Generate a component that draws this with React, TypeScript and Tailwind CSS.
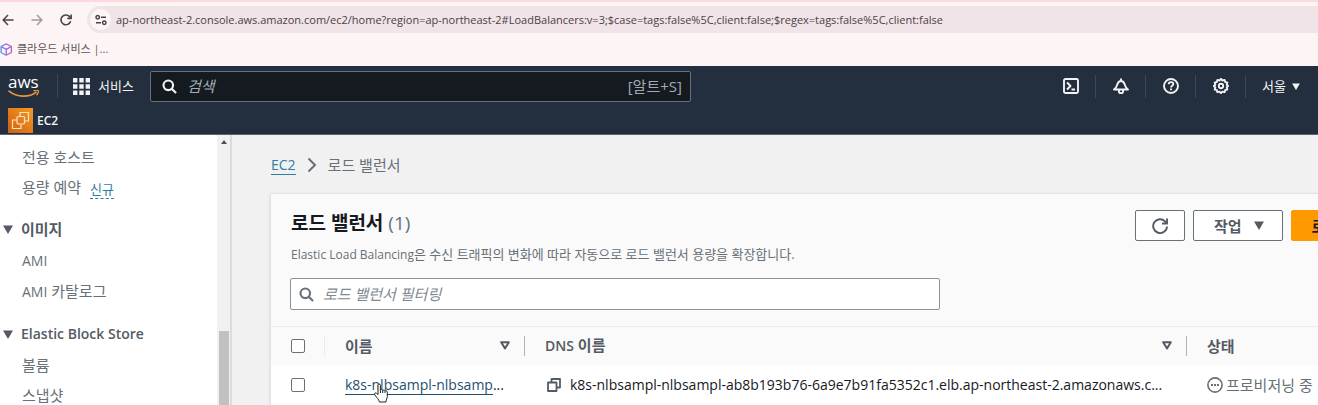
import { ReactNode } from 'react'

const imageLinks = [
  { prefix: 'AMI', name: '' },
  { prefix: 'AMI', name: ' 카탈로그' }
]
const storeLinks = [
  { prefix: '', name: '볼륨' },
  { prefix: '', name: '스냅샷' }
]

function Caret({ className = '' }: { className?: string }) {
  return (
    <svg viewBox="0 0 10 9" className={className} fill="currentColor" aria-hidden="true">
      <path d="M0 0.5h10L5 9z" />
    </svg>
  )
}

function SortIcon() {
  return (
    <svg viewBox="0 0 10 9" className="w-[10px] h-[9px] text-[#545b64]" fill="none" stroke="currentColor" strokeWidth="2" strokeLinejoin="round" aria-hidden="true">
      <path d="M1.2 1.2h7.6L5 7.4z" />
    </svg>
  )
}

function SearchIcon({ className = '' }: { className?: string }) {
  return (
    <svg viewBox="0 0 16 16" className={className} fill="none" stroke="currentColor" strokeWidth="2.3" aria-hidden="true">
      <circle cx="6.7" cy="6.7" r="5.1" />
      <path d="M10.3 10.3L15 15" />
    </svg>
  )
}

function BrowserBar() {
  return (
    <div className="bg-[#fdf5f5] text-[#4a4246]">
      <div className="h-[2px] flex">
        <div className="w-[183px] bg-[#fbd9dc]" />
        <div className="flex-1 bg-[#f9dcdc]" />
      </div>
      <div className="flex items-center pt-1 h-[31px]">
        <button aria-label="Back" className="w-4 flex justify-center">
          <svg viewBox="0 0 12 12" className="w-3 h-3" fill="none" stroke="#4a4246" strokeWidth="1.5">
            <path d="M11.5 6H1.5M6 1L1.2 6 6 11" />
          </svg>
        </button>
        <button aria-label="Forward" className="w-[41px] flex justify-center">
          <svg viewBox="0 0 12 12" className="w-3 h-3" fill="none" stroke="#a39a9e" strokeWidth="1.5">
            <path d="M0.5 6h10M6 1l4.8 5L6 11" />
          </svg>
        </button>
        <button aria-label="Reload" className="w-[17px] flex justify-center">
          <svg viewBox="0 0 12 12" className="w-3 h-3" fill="none" stroke="#4a4246" strokeWidth="1.6">
            <path d="M10.6 7.3A4.9 4.9 0 1 1 9.6 2.6L11 4" />
            <path d="M11.1 0.6v3.8H7.3" />
          </svg>
        </button>
        <div className="flex-1 h-[27px] ml-[13px] pl-[3px] flex items-center rounded-l-full bg-[#f0e4e8]">
          <span className="w-[21px] h-[21px] rounded-full bg-[#fdf5f5] flex items-center justify-center">
            <svg viewBox="0 0 12 12" className="w-3 h-3" fill="none" stroke="#4a4246" strokeWidth="1.5">
              <circle cx="2.7" cy="3.2" r="1.7" />
              <path d="M6 3.2h5M1 8.8h5" />
              <circle cx="9.3" cy="8.8" r="1.7" />
            </svg>
          </span>
          <span className="ml-[5px] text-[11px] leading-4 whitespace-nowrap">
            ap-northeast-2.console.aws.amazon.com/ec2/home?region=ap-northeast-2#LoadBalancers:v=3;$case=tags:false%5C,client:false;$regex=tags:false%5C,client:false
          </span>
        </div>
      </div>
      <div className="h-[33px] pb-px flex items-center">
        <a href="#bookmark" className="flex items-center text-[11px] leading-4 text-[#5c5558]">
          <svg viewBox="0 0 14 14" className="w-[13px] h-[13px]" fill="none" strokeWidth="1.4" strokeLinejoin="round">
            <path d="M6.5 0.9L1.2 3.8v6.4l5.3 3" stroke="#5b8def" />
            <path d="M6.5 0.9l5.8 2.9v6.4l-5.8 3" stroke="#c65bd0" />
            <path d="M1.2 3.8l5.5 3 5.6-3M6.7 6.8v6.2" stroke="#8a6be0" />
          </svg>
          <span className="ml-1">클라우드 서비스 |...</span>
        </a>
      </div>
    </div>
  )
}

function NavButton({ label, children }: { label: string; children: ReactNode }) {
  return (
    <button aria-label={label} className="w-[50px] h-[23px] flex items-center justify-center border-r border-[#3c4858]">
      <svg viewBox="0 0 16 16" className="w-4 h-4" fill="none" stroke="currentColor" strokeWidth="1.9" strokeLinejoin="round">
        {children}
      </svg>
    </button>
  )
}

function AwsHeader() {
  return (
    <header className="bg-[#232f3e] text-[#f2f3f3] border-b border-[#5a6470]">
      <div className="h-10 flex items-center pr-[18px]">
        <a href="#home" className="w-[58px] h-6 pl-2 border-r border-[#3c4858] flex flex-col items-start">
          <span className="text-[17px] leading-4 text-white">aws</span>
          <svg viewBox="0 0 32 8" className="w-8 h-2" fill="none" stroke="#e8963a" aria-hidden="true">
            <path d="M1 1.2c8 6.4 20 6.4 27 1.2" strokeWidth="1.7" strokeLinecap="round" />
            <path d="M25.5 0.9c2.6-.6 4.6-.5 4.9 0s-.4 2.8-1.9 4.3" strokeWidth="1.3" />
          </svg>
        </a>
        <button className="flex items-center ml-[15px] text-[13px] leading-5">
          <svg viewBox="0 0 17 17" className="w-[17px] h-[17px]" fill="currentColor">
            <path d="M0 0h4.4v4.4H0zM6.3 0h4.4v4.4H6.3zM12.6 0H17v4.4h-4.4zM0 6.3h4.4v4.4H0zM6.3 6.3h4.4v4.4H6.3zM12.6 6.3H17v4.4h-4.4zM0 12.6h4.4V17H0zM6.3 12.6h4.4V17H6.3zM12.6 12.6H17V17h-4.4z" />
          </svg>
          <span className="ml-2 whitespace-nowrap">서비스</span>
        </button>
        <label className="flex-1 max-w-[541px] h-[31px] ml-4 px-2 flex items-center bg-[#151a21] border border-[#687078] rounded-xs text-[#a2abb3]">
          <SearchIcon className="w-[15px] h-[15px] ml-[3px] text-[#f2f3f3]" />
          <input type="search" placeholder="검색" aria-label="검색" className="flex-1 min-w-0 ml-[10px] bg-transparent text-[15px] leading-5 placeholder:italic placeholder:text-[#a2abb3] outline-none" />
          <span className="text-[15px] leading-5">[알트+S]</span>
        </label>
        <nav className="ml-auto flex items-center">
          <NavButton label="CloudShell">
            <rect x="1" y="1" width="14" height="14" rx="1.5" />
            <path d="M4 4.5L7.5 8 4 11.5M8.5 11.5H12" />
          </NavButton>
          <NavButton label="알림">
            <path d="M8 0.5V3M1 11.5h14c-2.2-1.5-2.8-3-3.4-5.2C11 4.2 9.8 3 8 3S5 4.2 4.4 6.3C3.8 8.5 3.2 10 1 11.5z" />
            <path d="M5.9 12v1.2a2.1 2.1 0 0 0 4.2 0V12" />
          </NavButton>
          <NavButton label="도움말">
            <circle cx="8" cy="8" r="7" />
            <path d="M5.7 6.3C5.7 4.9 6.6 4.1 8 4.1s2.3.8 2.3 2c0 1.6-2.3 1.7-2.3 3.4M8 10.6v1.7" />
          </NavButton>
          <NavButton label="설정">
            <path d="M8 0.9l1.5 1.6 2.1-.6.6 2.1 2.1.6-.6 2.1L15.1 8l-1.4 1.4.6 2.1-2.1.6-.6 2.1-2.1-.6L8 15.1l-1.5-1.5-2.1.6-.6-2.1-2.1-.6.6-2.1L.9 8l1.4-1.3-.6-2.1 2.1-.6.6-2.1 2.1.6z" />
            <circle cx="8" cy="8" r="2.2" />
          </NavButton>
          <button className="ml-4 flex items-center text-[13px] leading-5">
            <span>서울</span>
            <Caret className="w-2 h-[7px] ml-[6px]" />
          </button>
        </nav>
      </div>
      <div className="h-7 pt-px pl-2 flex items-center">
        <a href="#ec2" className="flex items-center text-[12px] leading-4 font-semibold">
          <svg viewBox="0 0 25 25" className="w-[25px] h-[25px]">
            <defs>
              <linearGradient id="ec2" x1="0" y1="1" x2="1" y2="0">
                <stop offset="0" stopColor="#cf5f12" />
                <stop offset="1" stopColor="#f79a22" />
              </linearGradient>
            </defs>
            <rect width="25" height="25" fill="url(#ec2)" />
            <g fill="none" stroke="#fde3c2" strokeWidth="1.2">
              <rect x="9" y="8.5" width="7.5" height="7.5" rx="1.2" />
              <path d="M12 8V4.5h8.5V13H17M8.5 12H4.5v8.5H13V16.5" />
            </g>
          </svg>
          <span className="ml-1">EC2</span>
        </a>
      </div>
    </header>
  )
}

function NavSection({ title, links }: { title: ReactNode; links: { prefix: string; name: string }[] }) {
  return (
    <section className="mt-3">
      <h3>
        <button className="flex items-center font-bold text-[#545b64]">
          <Caret className="w-[10px] h-[9px] ml-[3px] mr-2" />
          {title}
        </button>
      </h3>
      <ul className="mt-px">
        {links.map((link) => (
          <li key={link.prefix + link.name} className="pl-[22px]">
            <a href="#link">
              {link.prefix && <span className="text-[14px]">{link.prefix}</span>}
              {link.name}
            </a>
          </li>
        ))}
      </ul>
    </section>
  )
}

function Sidebar() {
  return (
    <aside className="shrink-0 flex w-[232px] bg-white border-r-2 border-[#dcdcdc]">
      <nav className="flex-1 pt-[7px] text-[15px] leading-[30px] text-[#687078]">
        <ul>
          <li className="pl-[22px]">
            <a href="#hosts">전용 호스트</a>
          </li>
          <li className="pl-[22px] flex items-center">
            <a href="#capacity">용량 예약</a>
            <a href="#new" className="ml-[9px] mt-1 text-[13px] leading-[18px] text-[#2f7ea8] border-b border-dashed border-[#2f7ea8]">신규</a>
          </li>
        </ul>
        <NavSection title="이미지" links={imageLinks} />
        <NavSection title={<span className="text-[14px] font-semibold">Elastic Block Store</span>} links={storeLinks} />
      </nav>
      <div className="w-[13px] bg-[#f1f1f1] flex flex-col items-center">
        <svg viewBox="0 0 6 4" className="w-[6px] h-1 mt-[5px] shrink-0" fill="#505050">
          <path d="M3 0l3 4H0z" />
        </svg>
        <div className="w-[10px] mt-[187px] flex-1 bg-[#c1c1c1]" />
      </div>
    </aside>
  )
}

function HeaderCell({ children }: { children: ReactNode }) {
  return (
    <th className="p-0 text-left font-bold">
      <div className="h-5 pl-5 pr-[14px] flex items-center justify-between border-r border-[#aab7b8]">
        {children}
        <button aria-label="정렬">
          <SortIcon />
        </button>
      </div>
    </th>
  )
}

function LoadBalancerTable() {
  return (
    <table className="w-full table-fixed text-[15px] leading-5">
      <colgroup>
        <col className="w-[54px]" />
        <col className="w-[200px]" />
        <col className="w-[662px]" />
        <col />
      </colgroup>
      <thead className="bg-[#fafafa] text-[#545b64]">
        <tr className="h-[38px] border-t border-[#eaeded]">
          <th className="p-0">
            <div className="h-5 pl-5 flex items-center border-r border-[#eaeded]">
              <input type="checkbox" aria-label="모두 선택" className="appearance-none w-[14px] h-[14px] bg-white border border-[#687078] rounded-xs" />
            </div>
          </th>
          <HeaderCell>이름</HeaderCell>
          <HeaderCell>
            <span>
              <span className="text-[14px] font-semibold">DNS</span> 이름
            </span>
          </HeaderCell>
          <th className="p-0 pl-5 text-left font-bold">상태</th>
        </tr>
      </thead>
      <tbody className="bg-white">
        <tr className="h-10 text-[#16191f]">
          <td className="p-0">
            <div className="pl-5 flex items-center">
              <input type="checkbox" aria-label="선택" className="appearance-none w-[14px] h-[14px] bg-white border border-[#687078] rounded-xs" />
            </div>
          </td>
          <td className="p-0 pl-5">
            <div className="relative text-[14px] leading-[18px] whitespace-nowrap">
              <a href="#lb" className="text-[#24506e] border-b border-[#24506e]">k8s-nlbsampl-nlbsamp</a>...
              <svg viewBox="0 0 16 20" className="absolute left-7 top-[7px] w-4 h-5" fill="#fff" stroke="#222" strokeWidth="1" strokeLinejoin="round">
                <path d="M5 11.5V2.2C5 .6 7.4.6 7.4 2.2v5c.3-1.1 2.3-1 2.3.4.4-1 2.2-.7 2.3.6.5-.8 2.3-.5 2.3 1v4.3c0 2-1.3 3-1.3 5.5H6.5C6 16.5 3.6 14.7 1.7 11.7c-.8-1.4.8-2.4 1.9-1.3z" />
                <path d="M7.4 7.2V10M9.7 7.6V10M12 8.2V10" fill="none" />
              </svg>
            </div>
          </td>
          <td className="p-0 pl-5">
            <div className="flex items-center text-[14px] whitespace-nowrap">
              <button aria-label="복사" className="ml-[2px] mr-[9px]">
                <svg viewBox="0 0 14 14" className="w-[14px] h-[14px]" fill="none" stroke="#545b64" strokeWidth="1.8" strokeLinejoin="round">
                  <path d="M1 4.5h8.5V13H1z" />
                  <path d="M4.5 4V1H13v8.5h-3" />
                </svg>
              </button>
              k8s-nlbsampl-nlbsampl-ab8b193b76-6a9e7b91fa5352c1.elb.ap-northeast-2.amazonaws.c...
            </div>
          </td>
          <td className="p-0 pl-5 text-[#687078]">
            <div className="flex items-center whitespace-nowrap">
              <svg viewBox="0 0 16 16" className="w-4 h-4 mr-[3px]" fill="none" stroke="currentColor" strokeWidth="1.6">
                <circle cx="8" cy="8" r="7.1" />
                <path d="M4 8h2M7 8h2M10 8h2" strokeWidth="2" />
              </svg>
              프로비저닝 중
            </div>
          </td>
        </tr>
      </tbody>
    </table>
  )
}

export default function App() {
  return (
    <div className="h-screen flex flex-col overflow-hidden bg-[#f1f1f1] font-['Open_Sans','Noto_Sans_CJK_KR',sans-serif]">
      <BrowserBar />
      <AwsHeader />
      <div className="flex-1 min-h-0 flex overflow-hidden">
        <Sidebar />
        <main className="flex-1 min-w-0 pl-[38px] pt-5 overflow-hidden">
          <nav className="pl-px flex items-center text-[15px] leading-5 text-[#687078]">
            <a href="#ec2" className="text-[14px] leading-[18px] text-[#2f7ea8] border-b border-[#2f7ea8]">EC2</a>
            <svg viewBox="0 0 10 16" className="w-[10px] h-4 mx-[11px]" fill="none" stroke="currentColor" strokeWidth="2">
              <path d="M1.5 1.5L8 8l-6.5 6.5" />
            </svg>
            <span>로드 밸런서</span>
          </nav>

          {/* The panel runs past the right edge of the window */}
          <div className="mt-[18px] -mr-[140px] bg-[#fafafa] border border-[#e1e4e4] shadow-sm">
            <div className="pl-[19px] pr-5 py-4">
              <div className="flex items-start justify-between">
                <div className="pl-px">
                  <h1 className="text-[19px] leading-[26px] font-bold text-[#16191f]">
                    로드 밸런서 <span className="font-normal text-[#687078]">(1)</span>
                  </h1>
                  <p className="mt-2 text-[13px] leading-5 text-[#687078]">
                    <span className="text-[12px]">Elastic Load Balancing</span>은 수신 트래픽의 변화에 따라 자동으로 로드 밸런서 용량을 확장합니다.
                  </p>
                </div>
                <div className="flex gap-2 text-[15px] leading-5 font-bold text-[#545b64]">
                  <button aria-label="새로 고침" className="w-[50px] h-[31px] flex items-center justify-center bg-white border border-[#687078] rounded-xs">
                    <svg viewBox="0 0 16 16" className="w-4 h-4" fill="none" stroke="currentColor" strokeWidth="1.9">
                      <path d="M15 8.5A6.9 6.9 0 1 1 13 3.3L15 5.3" />
                      <path d="M15 0.5V5.5H10" />
                    </svg>
                  </button>
                  <button className="h-[31px] pl-5 pr-[18px] flex items-center bg-white border border-[#687078] rounded-xs">
                    작업
                    <Caret className="w-[10px] h-[9px] ml-3" />
                  </button>
                  <button className="h-[31px] px-5 bg-[#ff9900] text-[#16191f] border border-[#ff9900] rounded-xs">로드 밸런서 생성</button>
                </div>
              </div>
              <label className="mt-[13px] max-w-[650px] h-8 pl-2 flex items-center bg-white border border-[#879596] rounded-xs">
                <SearchIcon className="w-[15px] h-[15px] text-[#687078]" />
                <input type="search" placeholder="로드 밸런서 필터링" aria-label="로드 밸런서 필터링" className="flex-1 ml-[9px] bg-transparent text-[15px] leading-5 placeholder:italic placeholder:text-[#808890] outline-none" />
              </label>
            </div>
            <LoadBalancerTable />
          </div>
        </main>
      </div>
    </div>
  )
}
